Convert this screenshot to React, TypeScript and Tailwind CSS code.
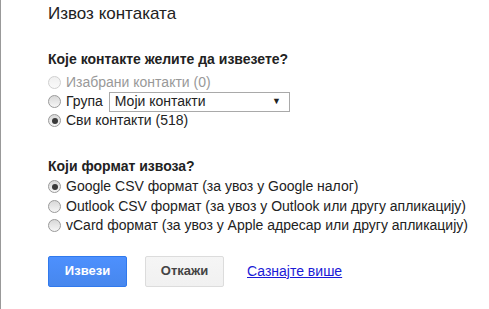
import { useState } from 'react'

function Radio({ checked, disabled }: { checked?: boolean; disabled?: boolean }) {
  return (
    <span
      className={`relative inline-flex h-[13px] w-[13px] shrink-0 items-center justify-center rounded-full border ${
        disabled
          ? 'border-[#d0d0d0] bg-gradient-to-b from-[#f0f0f0] to-[#fafafa]'
          : 'border-[#9a9a9a] bg-gradient-to-b from-[#d8d8d8] to-[#f6f6f6]'
      }`}
    >
      {checked && <span className="h-[6px] w-[6px] rounded-full bg-[#3a3a3a]" />}
    </span>
  )
}

export default function App() {
  const [group] = useState('Моји контакти')

  return (
    <div
      className="h-[309px] w-[489px] overflow-hidden border-l border-[#999] bg-white text-[14px] text-[#222]"
      style={{ fontFamily: '"Liberation Sans", Arial, sans-serif' }}
    >
      <div className="pl-[47px] pt-[3px]">
        <h1 className="text-[17px] leading-[22px] text-[#222]">Извоз контаката</h1>

        <h2 className="mt-[25px] text-[14px] font-bold leading-[18px] text-[#222]">
          Које контакте желите да извезете?
        </h2>
        <div className="mt-[5px] flex flex-col">
          <label className="flex h-[19px] items-center gap-[5px] text-[#999]">
            <Radio disabled />
            <span>Изабрани контакти (0)</span>
          </label>
          <label className="flex h-[19px] items-center gap-[5px]">
            <Radio />
            <span>Група</span>
            <span className="ml-[1px] flex h-[20px] w-[181px] items-center justify-between border border-[#a9a9a9] pl-[5px] pr-[8px]">
              <span>{group}</span>
              <span className="text-[9px]">▼</span>
            </span>
          </label>
          <label className="flex h-[19px] items-center gap-[5px]">
            <Radio checked />
            <span>Сви контакти (518)</span>
          </label>
        </div>

        <h2 className="mt-[27px] text-[14px] font-bold leading-[18px] text-[#222]">Који формат извоза?</h2>
        <div className="mt-[2px] flex flex-col">
          <label className="flex h-[19.5px] items-center gap-[5px]">
            <Radio checked />
            <span>Google CSV формат (за увоз у Google налог)</span>
          </label>
          <label className="flex h-[19.5px] items-center gap-[5px]">
            <Radio />
            <span>Outlook CSV формат (за увоз у Outlook или другу апликацију)</span>
          </label>
          <label className="flex h-[19.5px] items-center gap-[5px]">
            <Radio />
            <span>vCard формат (за увоз у Apple адресар или другу апликацију)</span>
          </label>
        </div>

        <div className="mt-[20px] flex items-center">
          <button className="h-[31px] w-[79px] rounded-[2px] border border-[#3079ed] bg-gradient-to-b from-[#4d90fe] to-[#4787ed] text-[13px] font-bold text-white">
            Извези
          </button>
          <button className="ml-[18px] h-[31px] w-[79px] rounded-[2px] border border-[#dcdcdc] bg-gradient-to-b from-[#f5f5f5] to-[#f1f1f1] text-[13px] font-bold text-[#444]">
            Откажи
          </button>
          <a href="#" className="ml-[23px] text-[14px] text-[#1a1ad6] underline">
            Сазнајте више
          </a>
        </div>
      </div>
    </div>
  )
}
